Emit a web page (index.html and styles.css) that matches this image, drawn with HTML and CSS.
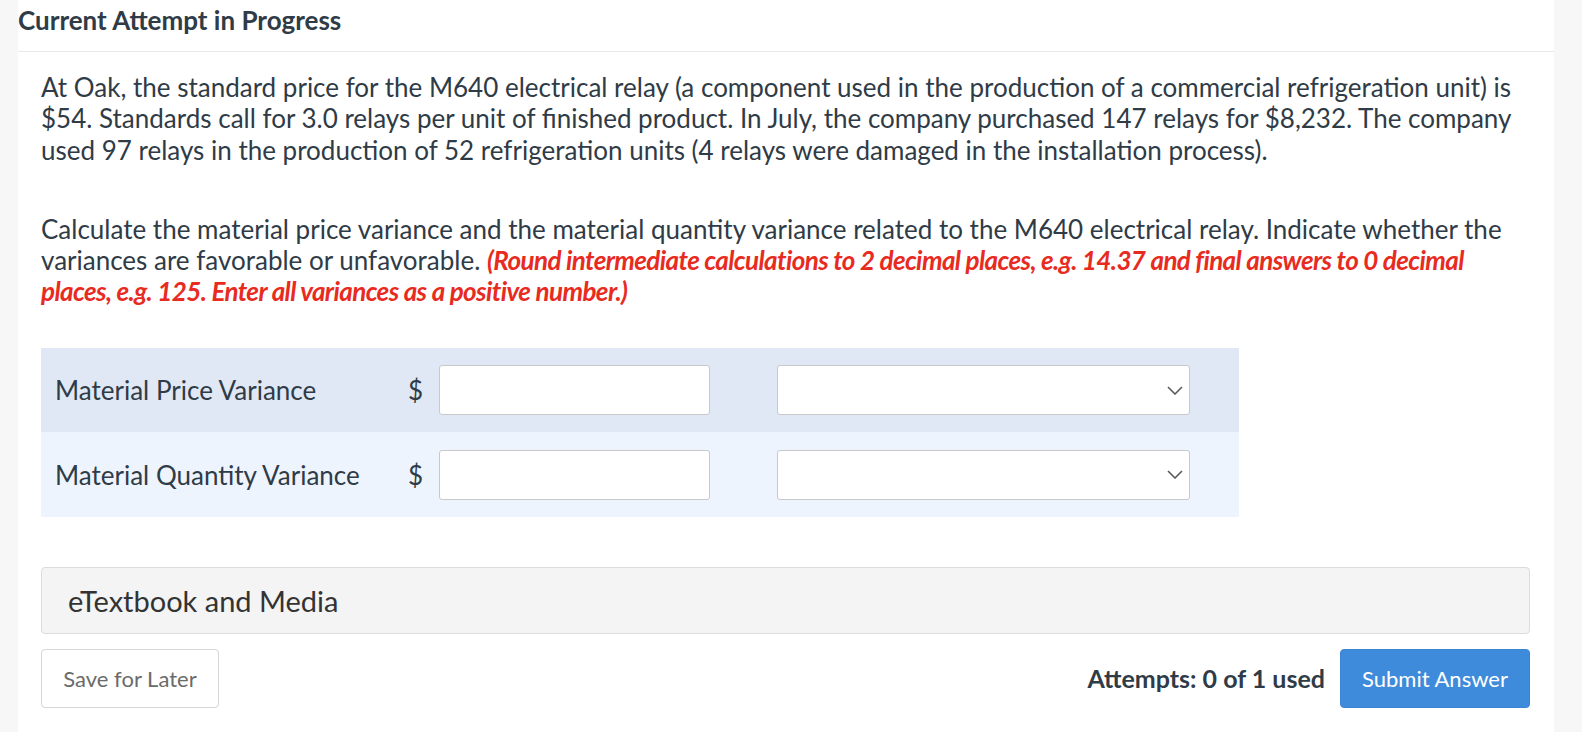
FILE: index.html
```html
<!DOCTYPE html>
<html lang="en">
<head>
<meta charset="utf-8">
<title>Current Attempt in Progress</title>
<link rel="stylesheet" href="styles.css">
</head>
<body>
<main class="page">
  <h1 class="title">Current Attempt in Progress</h1>
  <section class="content">
    <p class="para">At Oak, the standard price for the M640 electrical relay (a component used in the production of a commercial refrigeration unit) is $54. Standards call for 3.0 relays per unit of finished product. In July, the company purchased 147 relays for $8,232. The company used 97 relays in the production of 52 refrigeration units (4 relays were damaged in the installation process).</p>
    <p class="para para-2">Calculate the material price variance and the material quantity variance related to the M640 electrical relay. Indicate whether the variances are favorable or unfavorable. <em class="note">(Round intermediate calculations to 2 decimal places, e.g. 14.37 and final answers to 0 decimal places, e.g. 125. Enter all variances as a positive number.)</em></p>

    <div class="table">
      <div class="row row-dark">
        <span class="label">Material Price Variance</span>
        <span class="currency">$</span>
        <span class="input"></span>
        <span class="select">
          <svg class="chev" width="16" height="9" viewBox="0 0 16 9"><path d="M1 1 L8 8 L15 1" fill="none" stroke="#5a5a5a" stroke-width="1.6"/></svg>
        </span>
      </div>
      <div class="row row-light">
        <span class="label">Material Quantity Variance</span>
        <span class="currency">$</span>
        <span class="input"></span>
        <span class="select">
          <svg class="chev" width="16" height="9" viewBox="0 0 16 9"><path d="M1 1 L8 8 L15 1" fill="none" stroke="#5a5a5a" stroke-width="1.6"/></svg>
        </span>
      </div>
    </div>

    <div class="media">eTextbook and Media</div>

    <div class="actions">
      <button class="btn btn-save">Save for Later</button>
      <div class="right">
        <span class="attempts">Attempts: 0 of 1 used</span>
        <button class="btn btn-submit">Submit Answer</button>
      </div>
    </div>
  </section>
</main>
</body>
</html>
```

FILE: styles.css
```css
* { box-sizing: border-box; }

html, body {
  margin: 0;
  padding: 0;
}

body {
  background: #f7f7f8;
  padding: 0 28px 0 18px;
  font-family: Lato, "Open Sans", Arial, sans-serif;
  color: #2f3b46;
  height: 732px;
  overflow: hidden;
}

.page {
  background: #ffffff;
  min-height: 732px;
}

.title {
  margin: 0;
  padding: 5px 0 15px 0;
  font-size: 26px;
  font-weight: 700;
  line-height: 31px;
  color: #2f3b46;
  border-bottom: 1px solid #e9e9e9;
}

.content {
  padding: 20px 24px 0 23px;
}

.para {
  margin: 0;
  font-size: 26px;
  line-height: 31.3px;
}

.para-2 {
  margin-top: 48px;
}

.note {
  font-style: italic;
  font-weight: 700;
  color: #e82b1f;
  letter-spacing: -0.6px;
}

.table {
  width: 1198px;
  margin-top: 40px;
}

.row {
  display: flex;
  align-items: center;
  padding: 17px 48px 17px 14px;
  height: 84.5px;
}

.row-dark { background: #dfe8f4; }
.row-light { background: #edf4fd; }

.label {
  width: 353px;
  font-size: 26px;
}

.currency {
  width: 31px;
  font-size: 26px;
}

.input {
  width: 271px;
  height: 50px;
  background: #fff;
  border: 1px solid #c9c9c9;
  border-radius: 3px;
}

.select {
  width: 413px;
  height: 50px;
  margin-left: 67px;
  background: #fff;
  border: 1px solid #c9c9c9;
  border-radius: 3px;
  display: flex;
  align-items: center;
  justify-content: flex-end;
  padding-right: 6px;
}

.media {
  margin-top: 50px;
  height: 67px;
  background: #f4f4f4;
  border: 1px solid #dcdcdc;
  border-radius: 4px;
  display: flex;
  align-items: center;
  padding-left: 26px;
  font-size: 29px;
  color: #333333;
}

.actions {
  margin-top: 15px;
  display: flex;
  justify-content: space-between;
  align-items: center;
}

.right {
  display: flex;
  align-items: center;
  gap: 15px;
}

.btn {
  height: 59px;
  border-radius: 4px;
  font-family: Lato, "Open Sans", Arial, sans-serif;
  font-size: 22px;
  cursor: pointer;
}

.btn-save {
  width: 178px;
  background: #fff;
  border: 1px solid #d6d6d6;
  color: #6b6b6b;
}

.btn-submit {
  width: 190px;
  background: #3f8bdb;
  border: 1px solid #3a84d3;
  color: #ffffff;
}

.attempts {
  font-size: 25px;
  font-weight: 700;
  color: #2f3b46;
}
```
